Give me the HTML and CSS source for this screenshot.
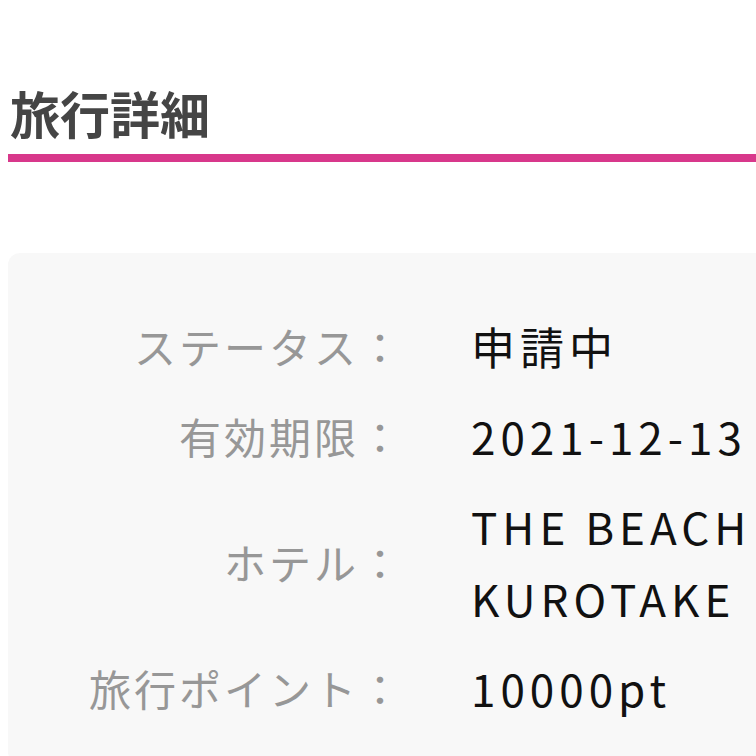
FILE: index.html
```html
<!DOCTYPE html>
<html lang="ja">
<head>
<meta charset="utf-8">
<title>旅行詳細</title>
<link rel="stylesheet" href="styles.css">
</head>
<body>
<main class="page">
  <h1 class="page-title">旅行詳細</h1>
  <section class="detail-card">
    <dl class="detail-list">
      <div class="detail-row">
        <dt class="detail-label">ステータス：</dt>
        <dd class="detail-value">申請中</dd>
      </div>
      <div class="detail-row">
        <dt class="detail-label">有効期限：</dt>
        <dd class="detail-value">2021-12-13</dd>
      </div>
      <div class="detail-row">
        <dt class="detail-label">ホテル：</dt>
        <dd class="detail-value">THE BEACH KUROTAKE</dd>
      </div>
      <div class="detail-row">
        <dt class="detail-label">旅行ポイント：</dt>
        <dd class="detail-value">10000pt</dd>
      </div>
    </dl>
  </section>
</main>
</body>
</html>
```

FILE: styles.css
```css
html, body {
  margin: 0;
  padding: 0;
  background: #ffffff;
  overflow: hidden;
}

body {
  font-family: "Noto Sans CJK JP", "Noto Sans", sans-serif;
}

.page {
  padding: 76px 0 0 8px;
}

.page-title {
  margin: 0 -20px 0 0;
  padding: 0 0 6px 2px;
  font-size: 50px;
  font-weight: 700;
  line-height: 72px;
  color: #454545;
  border-bottom: 8px solid #d8388b;
}

.detail-card {
  margin-top: 91px;
  margin-right: -60px;
  background: #f8f8f8;
  border-radius: 12px;
  padding: 57px 0 40px;
}

.detail-list {
  margin: 0;
  display: flex;
  flex-direction: column;
  gap: 18px;
}

.detail-row {
  display: grid;
  grid-template-columns: 393px 300px;
  column-gap: 70px;
  align-items: center;
}

.detail-label {
  margin: 0 -3px 0 0;
  text-align: right;
  font-size: 42px;
  line-height: 72px;
  letter-spacing: 3px;
  color: #979797;
}

.detail-value {
  margin: 0;
  font-size: 44px;
  line-height: 72px;
  letter-spacing: 5px;
  color: #111111;
}
```
